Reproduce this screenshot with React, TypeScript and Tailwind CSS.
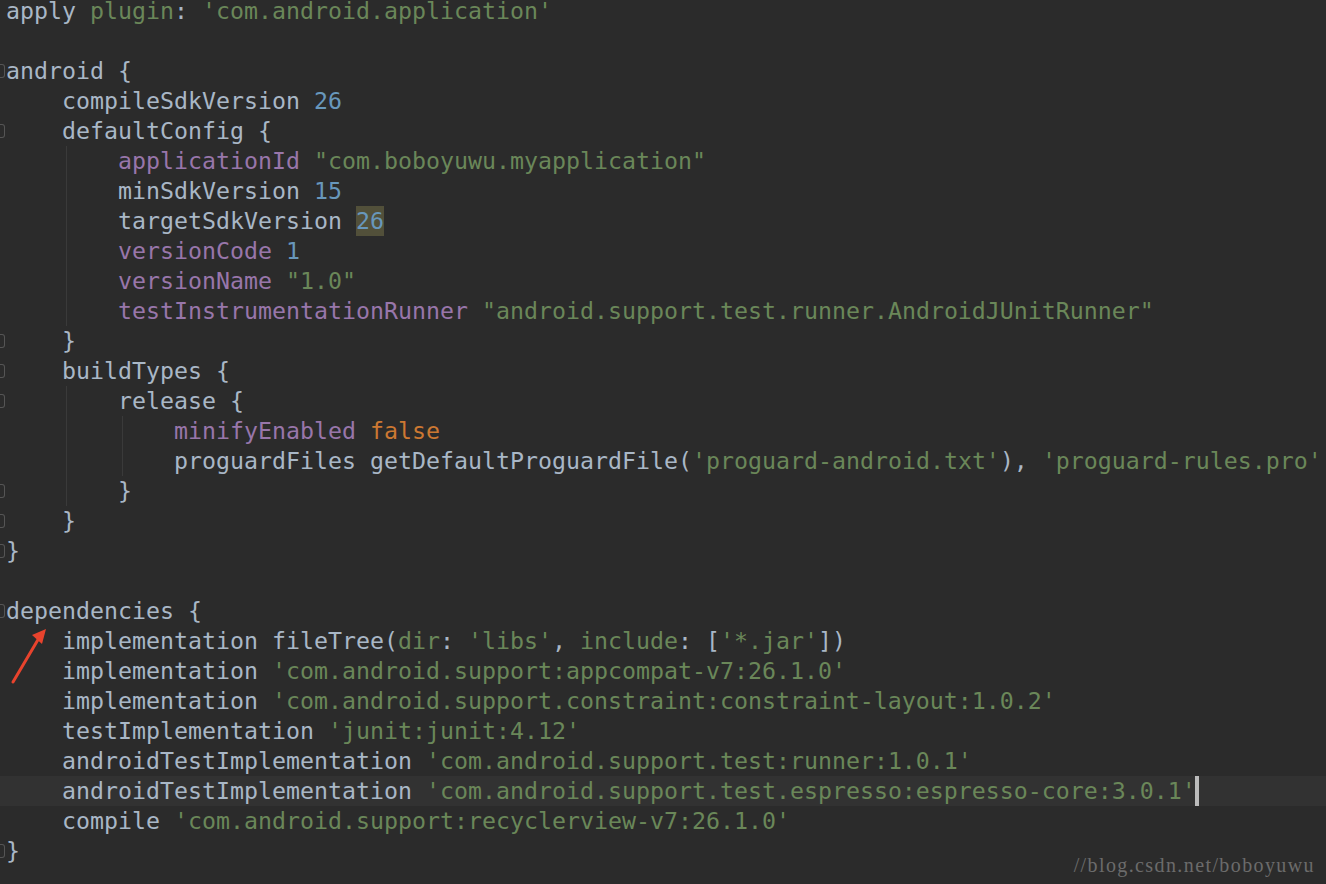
import React from 'react';

type Tok = 'd' | 's' | 'p' | 'n' | 'k' | 'h';
type Seg = [Tok, string];

interface Line {
  indent?: number;
  guides?: number[];
  fold?: boolean;
  current?: boolean;
  caret?: boolean;
  first?: boolean;
  segs: Seg[];
}

const tokClass: Record<Tok, string> = {
  d: 'text-[#a9b7c6]',
  s: 'text-[#6a8759]',
  p: 'text-[#9876aa]',
  n: 'text-[#6897bb]',
  k: 'text-[#cc7832]',
  h: 'inline-block h-[30px] bg-[#52503a] text-[#6897bb]',
};

const lines: Line[] = [
  { first: true, segs: [['d', 'apply '], ['s', 'plugin'], ['d', ': '], ['s', "'com.android.application'"]] },
  { segs: [] },
  { fold: true, segs: [['d', 'android {']] },
  { indent: 1, segs: [['d', 'compileSdkVersion '], ['n', '26']] },
  { indent: 1, fold: true, segs: [['d', 'defaultConfig {']] },
  { indent: 2, guides: [1], segs: [['p', 'applicationId'], ['d', ' '], ['s', '"com.boboyuwu.myapplication"']] },
  { indent: 2, guides: [1], segs: [['d', 'minSdkVersion '], ['n', '15']] },
  { indent: 2, guides: [1], segs: [['d', 'targetSdkVersion '], ['h', '26']] },
  { indent: 2, guides: [1], segs: [['p', 'versionCode'], ['d', ' '], ['n', '1']] },
  { indent: 2, guides: [1], segs: [['p', 'versionName'], ['d', ' '], ['s', '"1.0"']] },
  {
    indent: 2,
    guides: [1],
    segs: [['p', 'testInstrumentationRunner'], ['d', ' '], ['s', '"android.support.test.runner.AndroidJUnitRunner"']],
  },
  { indent: 1, fold: true, segs: [['d', '}']] },
  { indent: 1, fold: true, segs: [['d', 'buildTypes {']] },
  { indent: 2, guides: [1], fold: true, segs: [['d', 'release {']] },
  { indent: 3, guides: [1, 2], segs: [['p', 'minifyEnabled'], ['d', ' '], ['k', 'false']] },
  {
    indent: 3,
    guides: [1, 2],
    segs: [
      ['d', 'proguardFiles getDefaultProguardFile('],
      ['s', "'proguard-android.txt'"],
      ['d', '), '],
      ['s', "'proguard-rules.pro'"],
    ],
  },
  { indent: 2, guides: [1], fold: true, segs: [['d', '}']] },
  { indent: 1, fold: true, segs: [['d', '}']] },
  { fold: true, segs: [['d', '}']] },
  { segs: [] },
  { fold: true, segs: [['d', 'dependencies {']] },
  {
    indent: 1,
    segs: [
      ['d', 'implementation fileTree('],
      ['s', 'dir'],
      ['d', ': '],
      ['s', "'libs'"],
      ['d', ', '],
      ['s', 'include'],
      ['d', ': ['],
      ['s', "'*.jar'"],
      ['d', '])'],
    ],
  },
  { indent: 1, segs: [['d', 'implementation '], ['s', "'com.android.support:appcompat-v7:26.1.0'"]] },
  { indent: 1, segs: [['d', 'implementation '], ['s', "'com.android.support.constraint:constraint-layout:1.0.2'"]] },
  { indent: 1, segs: [['d', 'testImplementation '], ['s', "'junit:junit:4.12'"]] },
  { indent: 1, segs: [['d', 'androidTestImplementation '], ['s', "'com.android.support.test:runner:1.0.1'"]] },
  {
    indent: 1,
    current: true,
    caret: true,
    segs: [['d', 'androidTestImplementation '], ['s', "'com.android.support.test.espresso:espresso-core:3.0.1'"]],
  },
  { indent: 1, segs: [['d', 'compile '], ['s', "'com.android.support:recyclerview-v7:26.1.0'"]] },
  { fold: true, segs: [['d', '}']] },
];

const CodeLine: React.FC<{ line: Line }> = ({ line }) => {
  const levels = Array.from({ length: line.indent ?? 0 }, (_, i) => i);
  return (
    <div
      className={`flex items-stretch ${line.first ? 'h-[26px]' : 'h-[30px]'} ${line.current ? 'bg-[#323232]' : ''}`}
    >
      <div className="w-[6px] shrink-0 flex items-center">
        {line.fold && <div className="w-[5px] h-[14px] border border-l-0 border-[#555555] rounded-r-[3px]" />}
      </div>
      {levels.map((i) => (
        <div key={i} className="w-[56px] shrink-0 flex">
          {line.guides?.includes(i) && <div className="ml-[4px] w-[1px] h-full bg-[#3a3a3a]" />}
        </div>
      ))}
      <div className={`whitespace-pre ${line.first ? 'leading-[22px]' : 'leading-[30px]'}`}>
        {line.segs.map(([t, s], j) => (
          <span key={j} className={tokClass[t]}>
            {s}
          </span>
        ))}
        {line.caret && <span className="inline-block align-top w-[4px] h-[30px] ml-[-1px] bg-[#bbbbbb]" />}
      </div>
    </div>
  );
};

export default function App() {
  return (
    <div className="relative w-[1326px] h-[884px] overflow-hidden bg-[#2b2b2b]">
      <div className="font-['DejaVu_Sans_Mono',monospace] text-[23.25px]">
        {lines.map((l, i) => (
          <CodeLine key={i} line={l} />
        ))}
      </div>

      {/* red annotation arrow */}
      <svg className="absolute left-0 top-[620px]" width="60" height="70" viewBox="0 0 60 70">
        <line x1="13" y1="62" x2="39" y2="18" stroke="#e8432d" strokeWidth="3" strokeLinecap="round" />
        <polygon points="46,9 32,15 42,24" fill="#e8432d" />
      </svg>

      <div className="absolute right-[11px] top-[852px] font-['Liberation_Serif',serif] text-[20px] leading-[26px] tracking-[1.4px] text-[#6b6b6b]">
        //blog.csdn.net/boboyuwu
      </div>
    </div>
  );
}
